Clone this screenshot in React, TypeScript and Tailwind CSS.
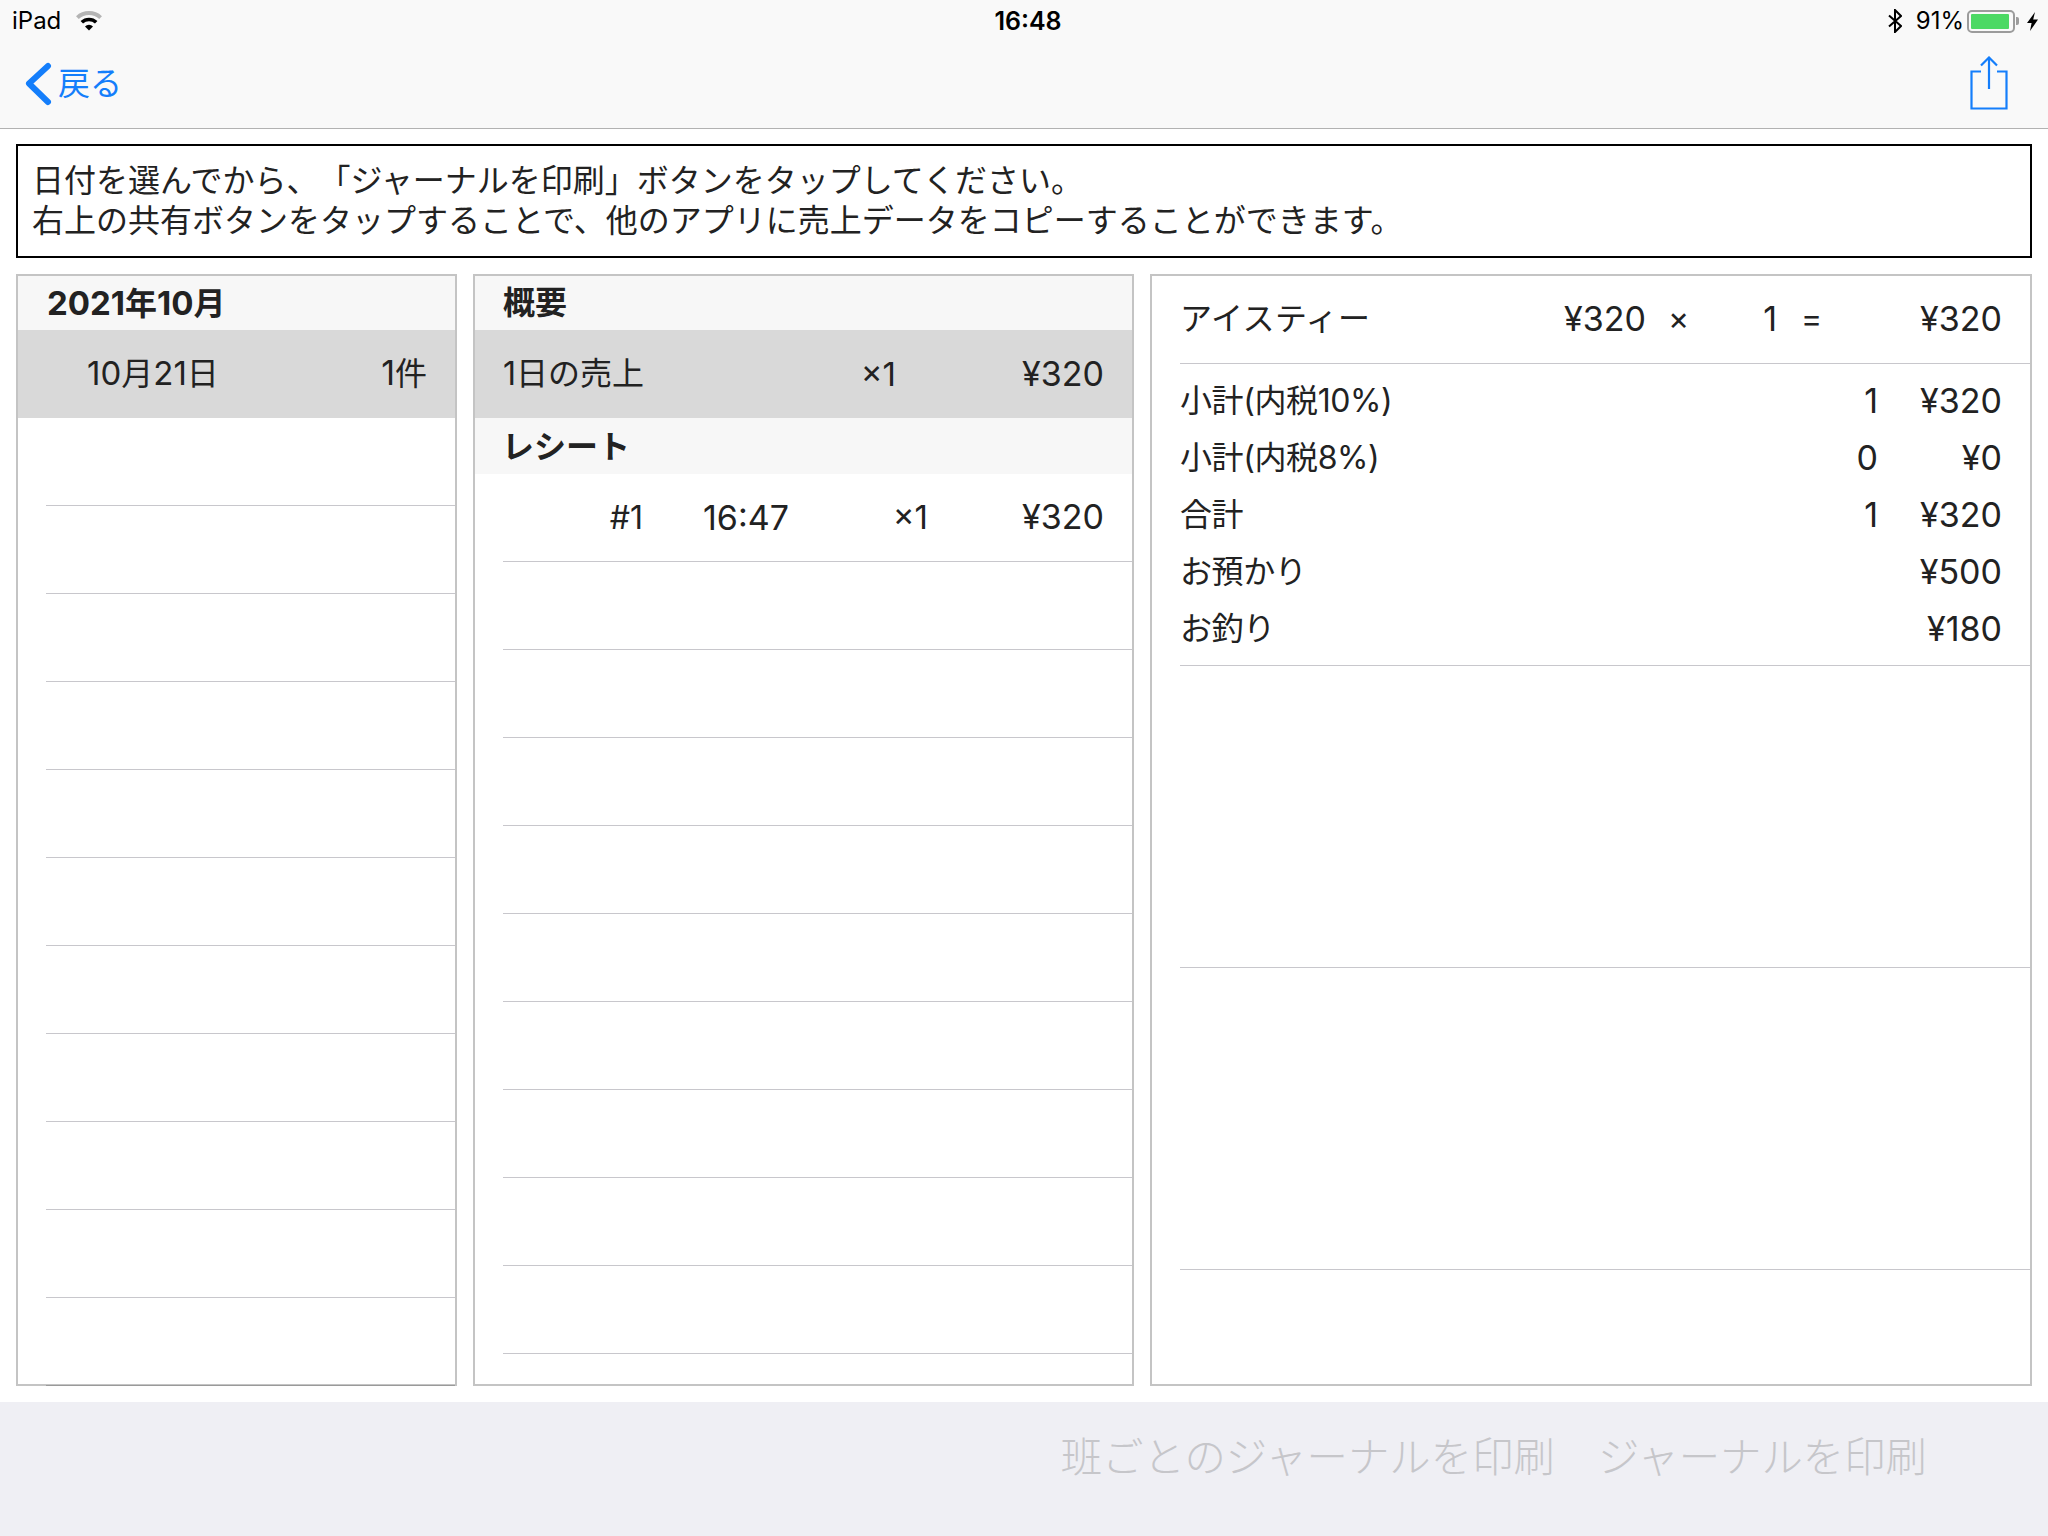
import React from "react";

const font = "font-['Inter','Noto_Sans_CJK_JP',sans-serif]";

function Wifi() {
  return (
    <svg width="26" height="20" viewBox="0 0 26 20" fill="none">
      <path d="M1.4 6.6A17 17 0 0 1 24.6 6.6" stroke="#b4b4b4" strokeWidth="4" />
      <path d="M5.8 11.3A10.5 10.5 0 0 1 20.2 11.3" stroke="#000" strokeWidth="3.6" />
      <path d="M13 19.5L9 15.4A5.6 5.6 0 0 1 17 15.4Z" fill="#000" />
    </svg>
  );
}

function Bluetooth() {
  return (
    <svg width="14" height="24" viewBox="0 0 14 24" fill="none" stroke="#000" strokeWidth="2">
      <path d="M1 6.5L13 17L7 23V1L13 7L1 17.5" />
    </svg>
  );
}

function Battery() {
  return (
    <div className="flex items-center gap-[1px]">
      <div className="h-[23px] w-[48px] rounded-[5px] border-2 border-[#9c9c9c] p-[2px]">
        <div className="h-full w-[38px] rounded-[1px] bg-[#4cd964]" />
      </div>
      <div className="h-[8px] w-[3px] rounded-r-[2px] bg-[#9c9c9c]" />
    </div>
  );
}

function Bolt() {
  return (
    <svg width="11" height="19" viewBox="0 0 11 19" fill="#000">
      <path d="M8 0L0 11H4.6L3 19L11 7.5H6.2Z" />
    </svg>
  );
}

function BackChevron() {
  return (
    <svg width="28" height="44" viewBox="0 0 28 44" fill="none" stroke="#147efb" strokeWidth="6" strokeLinecap="round" strokeLinejoin="round">
      <path d="M23 4L4 21.5L23 40" />
    </svg>
  );
}

function Share() {
  return (
    <svg width="38" height="54" viewBox="0 0 38 54" fill="none" stroke="#147efb" strokeWidth="2.2">
      <path d="M11 15.5H1.5V52.5H36.5V15.5H27" />
      <path d="M19 1.5V33" />
      <path d="M11 9.5L19 1.5L27 9.5" />
    </svg>
  );
}

function N({ children }: { children: React.ReactNode }) {
  return <span className="text-[34px]">{children}</span>;
}

function M({ children }: { children: React.ReactNode }) {
  return <span className="text-[33px]">{children}</span>;
}

function SectionHeader({ children, className = "" }: { children: React.ReactNode; className?: string }) {
  return (
    <div className={`flex items-center bg-[#f7f7f7] text-[32px] font-bold text-[#222222] ${className}`}>
      <span>{children}</span>
    </div>
  );
}

function EmptyRows({ count, darkLast = false }: { count: number; darkLast?: boolean }) {
  return (
    <>
      {Array.from({ length: count }).map((_, i) => (
        <div key={i} className="h-[88px] shrink-0 pl-[28px]">
          <div className={`h-full border-b ${darkLast && i === count - 1 ? "border-[#9a9a9a]" : "border-[#c8c7cc]"}`} />
        </div>
      ))}
    </>
  );
}

function SummaryLine({ label, count, value }: { label: string; count?: string; value: string }) {
  return (
    <div className="flex h-[57px] items-center pr-[28px] pl-[28px]">
      <span className="flex-1 tracking-[-0.4px]">{label}</span>
      <span className="w-[60px] text-right text-[34px]">{count}</span>
      <span className="w-[124px] text-right text-[34px]">{value}</span>
    </div>
  );
}

export default function App() {
  return (
    <div className={`flex h-[1536px] w-[2048px] flex-col bg-white text-[32px] leading-[40px] text-[#222222] [text-spacing-trim:space-all] ${font}`}>
      <header className="h-[129px] shrink-0 border-b border-[#b2b2b2] bg-[#f9f9f9]">
        <div className="flex h-[40px] items-center pt-[2px] pr-[10px] pl-[12px] text-[24px] text-black">
          <div className="flex flex-1 items-center gap-[15px]">
            <span>iPad</span>
            <Wifi />
          </div>
          <span className="ml-[6px] text-[25px] font-semibold">16:48</span>
          <div className="flex flex-1 items-center justify-end">
            <Bluetooth />
            <span className="mr-[3px] ml-[14px]">91%</span>
            <Battery />
            <span className="ml-[8px]">
              <Bolt />
            </span>
          </div>
        </div>
        <div className="flex h-[88px] items-center justify-between pr-[40px] pl-[25px]">
          <div className="flex items-center gap-[5px] text-[32px] text-[#147efb]">
            <BackChevron />
            <span>戻る</span>
          </div>
          <div className="-mt-[2px]">
            <Share />
          </div>
        </div>
      </header>

      <main className="flex flex-col px-4 pt-[15px]">
        <div className="h-[114px] border-2 border-black px-[14px] py-[15px] text-[32px] leading-[40px] text-[#222222]">
          <div>日付を選んでから、「ジャーナルを印刷」ボタンをタップしてください。</div>
          <div>右上の共有ボタンをタップすることで、他のアプリに売上データをコピーすることができます。</div>
        </div>

        <div className="mt-4 flex h-[1112px] gap-[16px]">
          <section className="w-[441px] border-2 border-[#c4c4c4]">
            <SectionHeader className="h-[54px] pl-[29px]">
              <M>2021</M>年<M>10</M>月
            </SectionHeader>
            <div className="flex h-[88px] items-center justify-between bg-[#d9d9d9] pr-[28px] pb-[2px] pl-[69px]">
              <span>
                <M>10</M>月<M>21</M>日
              </span>
              <span>
                <N>1</N>件
              </span>
            </div>
            <EmptyRows count={11} darkLast />
          </section>

          <section className="w-[661px] border-2 border-[#c4c4c4]">
            <SectionHeader className="h-[54px] pl-[28px]">概要</SectionHeader>
            <div className="flex h-[88px] items-center bg-[#d9d9d9] pr-[28px] pl-[28px]">
              <span className="flex-1">1日の売上</span>
              <span className="w-[60px] text-right">
                <M>×1</M>
              </span>
              <span className="w-[208px] text-right">
                <N>¥320</N>
              </span>
            </div>
            <SectionHeader className="h-[56px] pt-[2px] pl-[27px]">レシート</SectionHeader>
            <div className="pl-[28px]">
              <div className="flex h-[88px] items-center border-b border-[#c8c7cc] pr-[28px]">
                <span className="w-[140px] text-right">#1</span>
                <span className="ml-[60px] w-[89px] text-[34px]">16:47</span>
                <span className="w-[136px] text-right">
                  <M>×1</M>
                </span>
                <span className="flex-1 text-right">
                  <N>¥320</N>
                </span>
              </div>
            </div>
            <EmptyRows count={9} />
          </section>

          <section className="flex-1 border-2 border-[#c4c4c4]">
            <div className="pl-[28px]">
              <div className="flex h-[88px] items-center border-b border-[#c8c7cc] pr-[28px] pb-[2px]">
                <span className="flex-1 tracking-[0.5px]">アイスティー</span>
                <span className="w-[86px] text-right text-[34px]">¥320</span>
                <span className="ml-[22px] w-[20px] text-center">×</span>
                <span className="ml-[73px] w-[16px] text-right text-[34px]">1</span>
                <span className="ml-[24px] w-[20px] text-center">=</span>
                <span className="w-[181px] text-right text-[34px]">¥320</span>
              </div>
            </div>
            <div className="h-[302px] py-[8px]">
              <SummaryLine label="小計(内税10%)" count="1" value="¥320" />
              <SummaryLine label="小計(内税8%)" count="0" value="¥0" />
              <SummaryLine label="合計" count="1" value="¥320" />
              <SummaryLine label="お預かり" value="¥500" />
              <SummaryLine label="お釣り" value="¥180" />
            </div>
            <div className="-mt-[1px] pl-[28px]">
              <div className="border-b border-[#c8c7cc]" />
            </div>
            <div className="h-[302px] pl-[28px]">
              <div className="h-full border-b border-[#c8c7cc]" />
            </div>
            <div className="h-[302px] pl-[28px]">
              <div className="h-full border-b border-[#c8c7cc]" />
            </div>
          </section>
        </div>
      </main>

      <footer className="mt-4 flex flex-1 justify-end gap-[43px] bg-[#efeff4] pt-[35px] pr-[121px] text-[41.4px] leading-[40px] font-light text-[#c6c6ca]">
        <span>班ごとのジャーナルを印刷</span>
        <span>ジャーナルを印刷</span>
      </footer>
    </div>
  );
}
